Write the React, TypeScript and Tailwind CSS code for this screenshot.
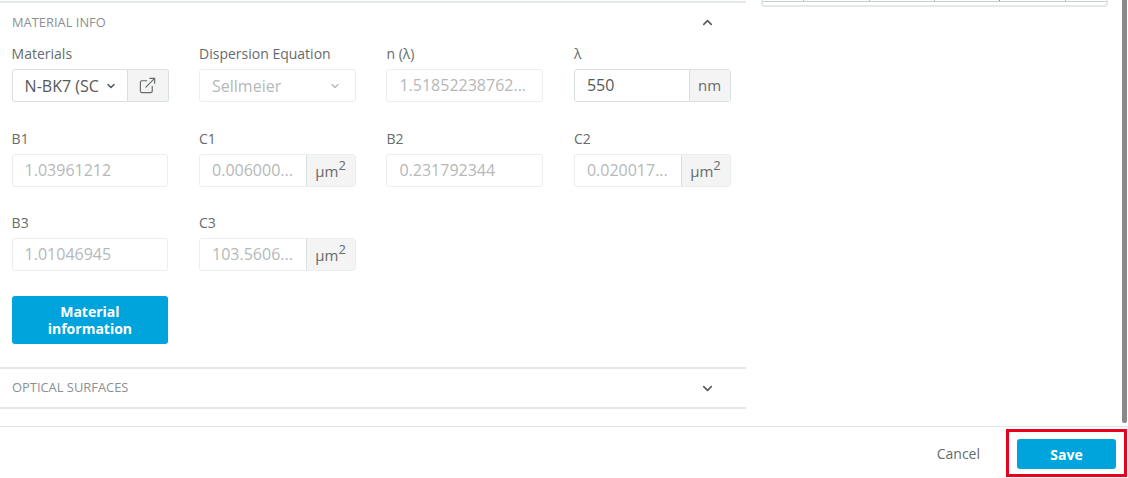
import React from "react";
import { ChevronDown, ChevronUp, ExternalLink } from "lucide-react";

const inputBox = "h-[33px] rounded-[3px] border border-[#e9eeee] bg-white";
const labelText = "mb-[5px] h-[20px] text-[14px] leading-[20px] text-[#666b6d]";

function Field({ label, value }: { label: string; value: string }) {
  return (
    <div>
      <div className={labelText}>{label}</div>
      <div className={`${inputBox} truncate px-[12px] text-[16px] leading-[31px] text-[#b5b8b9]`}>{value}</div>
    </div>
  );
}

function UnitField({ label, value, sup, active }: { label: string; value: string; sup?: boolean; active?: boolean }) {
  return (
    <div>
      <div className={labelText}>{label}</div>
      <div className={`flex h-[33px] rounded-[3px] border ${active ? "border-[#d8e0e0]" : "border-[#e9eeee]"}`}>
        <div className={`min-w-0 flex-1 truncate pl-[12px] text-[16px] leading-[31px] ${active ? "text-[#55595b]" : "text-[#b5b8b9]"}`}>{value}</div>
        {sup ? (
          <div className="flex w-[49px] shrink-0 justify-center border-l border-[#d8e0e0] bg-[#f4f4f5] text-[15px] leading-[33px] text-[#666b6d]">
            <span>
              µm<sup className="relative top-[-1px] align-super text-[13px] leading-none">2</sup>
            </span>
          </div>
        ) : (
          <div className="flex w-[41px] shrink-0 justify-center border-l border-[#d8e0e0] bg-[#f4f4f5] text-[15px] leading-[31px] text-[#666b6d]">nm</div>
        )}
      </div>
    </div>
  );
}

export default function App() {
  return (
    <div className="relative flex h-[478px] w-[1128px] flex-col overflow-hidden bg-white font-['Open_Sans',sans-serif]">
      <div className="flex h-[427px] border-b border-[#dfe5e5]">
        <div className="w-[746px] shrink-0 pt-[1px]">
          {/* Material info */}
          <div className="border-t-2 border-[#e3e9e9]">
            <div className="flex h-[39px] items-center justify-between pl-[12px] pr-[31px]">
              <span className="text-[12.9px] text-[#8b8f91]">MATERIAL INFO</span>
              <ChevronUp className="h-[15px] w-[15px] text-[#55595b]" strokeWidth={2.5} />
            </div>

            <div className="grid grid-cols-[156.6px_156.6px_156.6px_156.6px] gap-x-[30.85px] gap-y-[26.5px] pl-[11.6px] pt-[2px]">
              <div>
                <div className={labelText}>Materials</div>
                <div className="-mr-[1px] flex h-[33px]">
                  <div className="flex w-[116px] items-center justify-between rounded-l-[3px] border border-[#d8e0e0] pl-[12px] pr-[10px] text-[16px] text-[#55595b]">
                    <span className="truncate">N-BK7 (SC</span>
                    <ChevronDown className="h-[12px] w-[12px] shrink-0" strokeWidth={3} />
                  </div>
                  <div className="flex flex-1 items-center justify-center rounded-r-[3px] border border-l-0 border-[#d8e0e0] bg-[#f4f4f5]">
                    <ExternalLink className="h-[19px] w-[19px] text-[#666b6d]" strokeWidth={1.5} />
                  </div>
                </div>
              </div>
              <div>
                <div className={labelText}>Dispersion Equation</div>
                <div className={`${inputBox} flex items-center justify-between pl-[12px] pr-[14px] text-[16px] text-[#b5b8b9]`}>
                  <span>Sellmeier</span>
                  <ChevronDown className="h-[12px] w-[12px]" strokeWidth={2.5} />
                </div>
              </div>
              <Field label="n (λ)" value="1.51852238762..." />
              <UnitField label="λ" value="550" active />

              <Field label="B1" value="1.03961212" />
              <UnitField label="C1" value="0.006000..." sup />
              <Field label="B2" value="0.231792344" />
              <UnitField label="C2" value="0.020017..." sup />

              <Field label="B3" value="1.01046945" />
              <UnitField label="C3" value="103.5606..." sup />
            </div>

            <button className="ml-[11.6px] mt-[25px] block h-[48px] w-[156.6px] rounded-[3px] bg-[#00a4dc] text-[14px] font-bold leading-[17px] text-white">
              Material
              <br />
              information
            </button>
          </div>

          {/* Optical surfaces */}
          <div className="mt-[23px] border-y-2 border-[#e3e9e9]">
            <div className="flex h-[38px] items-center justify-between pl-[12px] pr-[31px]">
              <span className="text-[12.9px] text-[#8b8f91]">OPTICAL SURFACES</span>
              <ChevronDown className="h-[15px] w-[15px] text-[#55595b]" strokeWidth={2.5} />
            </div>
          </div>
        </div>

        {/* Bottom of the table in the right column */}
        <div className="ml-[15px] h-[7px] w-[347px] rounded-b-[4px] border-x-2 border-b-2 border-[#e3e9e9]">
          <div className="grid h-[2px] grid-cols-[41px_66px_65px_65px_66px_1fr] border-b border-[#c9cdcd]">
            <div className="border-r border-[#b5b8b9]" />
            <div className="border-r border-[#b5b8b9]" />
            <div className="border-r border-[#b5b8b9]" />
            <div className="border-r border-[#8b8f91]" />
            <div className="border-r border-[#b5b8b9]" />
            <div />
          </div>
        </div>
      </div>

      {/* Footer */}
      <div className="flex flex-1 items-center justify-end pr-[12px] pt-[3px]">
        <span className="mb-[2px] mr-[37px] text-[14px] text-[#666b6d]">Cancel</span>
        <button className="h-[30px] w-[99px] rounded-[3px] bg-[#00a4dc] text-[14px] font-bold text-white">Save</button>
      </div>

      {/* Scrollbar thumb */}
      <div className="absolute right-[1px] top-0 h-[423px] w-[5px] rounded-b-[2px] bg-[#8a8a8a]" />
      {/* Red annotation box */}
      <div className="absolute left-[1006px] top-[429px] h-[48px] w-[121px] border-[3px] border-[#e8001c]" />
    </div>
  );
}
